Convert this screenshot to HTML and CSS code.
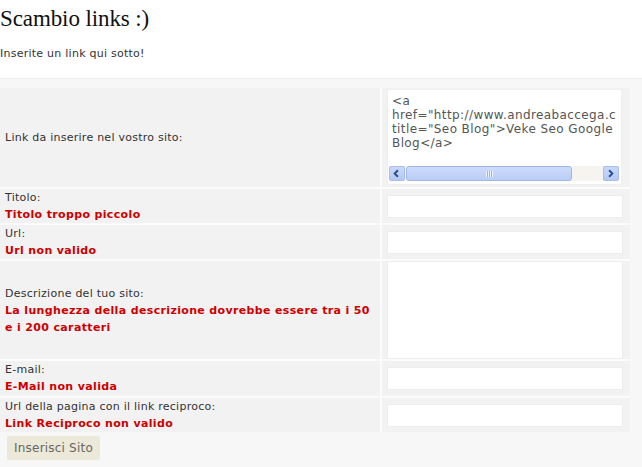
FILE: index.html
```html
<!DOCTYPE html>
<html>
<head>
<meta charset="utf-8">
<link rel="stylesheet" href="styles.css">
</head>
<body>
<h1 class="title">Scambio links :)</h1>
<p class="intro">Inserite un link qui sotto!</p>
<div class="box">
  <div class="grid">
    <div class="lbl center"><span class="ln">Link da inserire nel vostro sito:</span></div>
    <div class="fld top">
      <div class="code">
        <div class="code-text">&lt;a
href="http://www.andreabaccega.c
title="Seo Blog"&gt;Veke Seo Google
Blog&lt;/a&gt;</div>
        <div class="hscroll">
          <div class="sbtn">
            <svg width="16" height="15" viewBox="0 0 16 15"><path d="M9.5 4 L6 7.5 L9.5 11" fill="none" stroke="#2b4b8c" stroke-width="2"/></svg>
          </div>
          <div class="thumb"><span class="grip"></span></div>
          <div class="track"></div>
          <div class="sbtn">
            <svg width="16" height="15" viewBox="0 0 16 15"><path d="M6.5 4 L10 7.5 L6.5 11" fill="none" stroke="#2b4b8c" stroke-width="2"/></svg>
          </div>
        </div>
      </div>
    </div>

    <div class="lbl"><span class="ln">Titolo:</span><span class="ln err">Titolo troppo piccolo</span></div>
    <div class="fld"><div class="inp"></div></div>

    <div class="lbl"><span class="ln">Url:</span><span class="ln err">Url non valido</span></div>
    <div class="fld"><div class="inp"></div></div>

    <div class="lbl center"><span class="ln">Descrizione del tuo sito:</span><span class="ln err">La lunghezza della descrizione dovrebbe essere tra i 50 e i 200 caratteri</span></div>
    <div class="fld top"><div class="area"></div></div>

    <div class="lbl"><span class="ln">E-mail:</span><span class="ln err">E-Mail non valida</span></div>
    <div class="fld"><div class="inp"></div></div>

    <div class="lbl"><span class="ln">Url della pagina con il link reciproco:</span><span class="ln err">Link Reciproco non valido</span></div>
    <div class="fld"><div class="inp"></div></div>
  </div>
  <div class="actions">
    <button class="btn" type="button">Inserisci Sito</button>
  </div>
</div>
</body>
</html>
```
FILE: styles.css
```css
html, body {
  margin: 0;
  padding: 0;
  background: #ffffff;
}
body {
  font-family: "DejaVu Sans", Verdana, sans-serif;
  font-size: 11px;
  letter-spacing: 0.25px;
  color: #333333;
}
.title {
  font-family: "Times New Roman", "Liberation Serif", serif;
  font-weight: normal;
  font-size: 23px;
  line-height: 26px;
  letter-spacing: -0.1px;
  margin: 6px 0 0 0;
  color: #111111;
}
.intro {
  margin: 15px 0 0 0;
  line-height: 14px;
}
.box {
  margin-top: 17px;
  border-top: 1px solid #ececec;
  background: #f7f7f7;
  padding-top: 9px;
  height: 380px;
}
.grid {
  width: 630px;
  display: grid;
  grid-template-columns: 380px 248px;
  grid-template-rows: 99px 34px 34px 98px 35px 34px;
  column-gap: 2px;
  row-gap: 2px;
  background: #fbfbfb;
}
.lbl {
  background: #f2f2f2;
  padding: 0 6px 0 5px;
  line-height: 17px;
  display: flex;
  flex-direction: column;
  justify-content: flex-start;
}
.lbl.center {
  justify-content: center;
}
.ln {
  display: block;
}
.err {
  color: #cc0000;
  font-weight: bold;
  letter-spacing: 0.35px;
}
.fld {
  background: #f2f2f2;
  padding-left: 5px;
  display: flex;
  align-items: center;
}
.fld.top {
  align-items: flex-start;
}
.inp {
  width: 234px;
  height: 21px;
  background: #ffffff;
  border: 1px solid #ededed;
}
.area {
  width: 234px;
  height: 96px;
  background: #ffffff;
  border: 1px solid #ededed;
}
.code {
  width: 235px;
  height: 96px;
  background: #ffffff;
  margin-top: 1px;
  border: 1px solid #efefef;
  box-sizing: border-box;
  display: flex;
  flex-direction: column;
}
.code-text {
  white-space: pre;
  overflow: hidden;
  font-family: "DejaVu Sans", Verdana, sans-serif;
  font-size: 12px;
  letter-spacing: 0.4px;
  line-height: 14px;
  color: #555555;
  padding: 4px 0 0 4px;
  height: 73px;
  box-sizing: border-box;
}
.hscroll {
  margin: 3px 0 0 1px;
  width: 230px;
  height: 15px;
  display: flex;
  background: #f5f4ef;
}
.sbtn {
  width: 16px;
  height: 15px;
  background: linear-gradient(#c8d9fb, #b4c8f5);
  border: 1px solid #a9bde8;
  box-sizing: border-box;
  border-radius: 2px;
  display: flex;
  align-items: center;
  justify-content: center;
}
.sbtn svg { display: block; margin-left: -1px; margin-top: -1px; }
.thumb {
  width: 166px;
  height: 15px;
  margin-left: 1px;
  background: linear-gradient(#cddcfc, #b9cdf7);
  border: 1px solid #9fb6e6;
  box-sizing: border-box;
  border-radius: 3px;
  display: flex;
  align-items: center;
  justify-content: center;
}
.grip {
  width: 7px;
  height: 6px;
  background: repeating-linear-gradient(90deg, #eef3ff 0 1px, #9cb2e0 1px 2px);
}
.track {
  flex: 1;
}
.actions {
  padding: 4px 0 0 7px;
}
.btn {
  width: 93px;
  height: 24px;
  background: #ece9d8;
  border: none;
  border-radius: 2px;
  font-family: "DejaVu Sans", Verdana, sans-serif;
  font-size: 12px;
  letter-spacing: 0.2px;
  color: #666666;
  padding: 0;
}
```
